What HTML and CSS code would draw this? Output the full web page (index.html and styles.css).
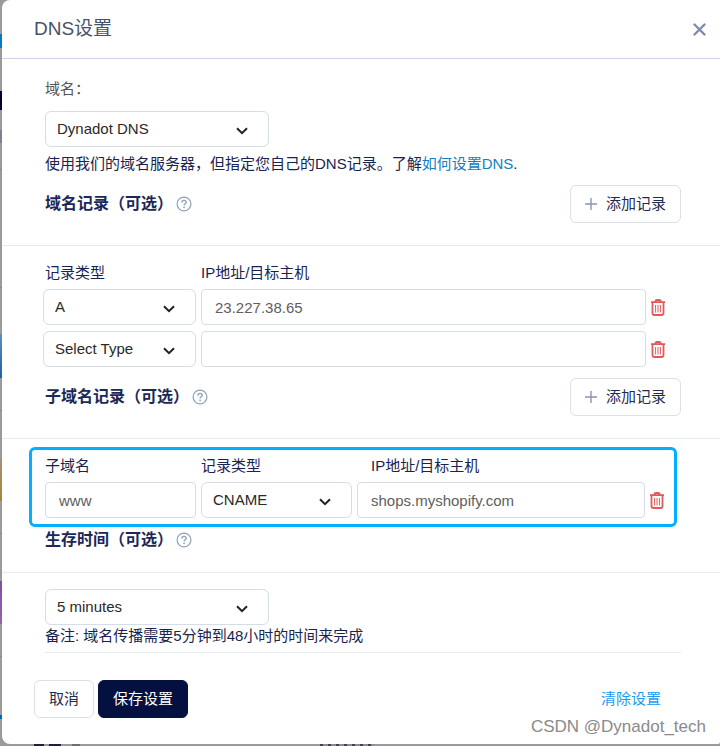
FILE: index.html
```html
<!DOCTYPE html>
<html lang="zh-CN">
<head>
<meta charset="utf-8">
<meta name="viewport" content="width=device-width, initial-scale=1">
<title>DNS设置</title>
<link rel="stylesheet" href="styles.css">
</head>
<body>
<svg class="sprite" aria-hidden="true">
  <symbol id="chevron" viewBox="0 0 12 8"><path d="M1 1.2 6 6.2 11 1.2" fill="none" stroke="#222" stroke-width="2"/></symbol>
  <symbol id="help" viewBox="0 0 16 16"><circle cx="8" cy="8" r="6.9" fill="none" stroke="#8fa1b3" stroke-width="1.2"/><path d="M5.9 6.5c0-1.3.9-2.1 2.1-2.1s2.2.7 2.2 1.9c0 1.5-2.1 1.500-2.100 3.100" fill="none" stroke="#8fa1b3" stroke-width="1.4"/><circle cx="8.1" cy="11.3" r=".9" fill="#8fa1b3"/></symbol>
  <symbol id="plus" viewBox="0 0 12 12"><path d="M6 0v12M0 6h12" fill="none" stroke="#8994b0" stroke-width="1.4"/></symbol>
  <symbol id="trash" viewBox="0 0 14 17"><path d="M1.500 3.500V14c0 1.300.700 2 2 2h7c1.300 0 2-.700 2-2V3.500M0 3.200h14M4.200 3c0-1.300.600-2 1.800-2h2c1.200 0 1.800.700 1.800 2" fill="none" stroke="#e05a5c" stroke-width="1.800"/><path d="M4.600 6v7.500M7 6v7.500M9.400 6v7.500" stroke="#e05a5c" stroke-width="1" fill="none"/></symbol>
</svg>
<main class="modal">
  <header class="modal-head">
    <h1>DNS设置</h1>
    <button class="icon-button" type="button" aria-label="关闭"><svg width="13" height="13" viewBox="0 0 13 13"><path d="M1.500 1.500l10 10M11.500 1.500l-10 10" stroke="#7f8ba8" stroke-width="2.400" stroke-linecap="round"/></svg></button>
  </header>
  <form>
    <section class="section servers">
      <label class="lead" for="server">域名：</label>
      <div class="select wide">
        <select id="server"><option>Dynadot DNS</option></select>
        <svg><use href="#chevron"/></svg>
      </div>
      <p class="hint">使用我们的域名服务器，但指定您自己的DNS记录。了解<a href="#">如何设置DNS</a>.</p>
      <div class="title-row">
        <h2>域名记录（可选）</h2><svg class="help"><use href="#help"/></svg>
        <button class="button add" type="button"><svg><use href="#plus"/></svg>添加记录</button>
      </div>
    </section>

    <section class="section records">
      <div class="grid domain">
        <label class="indent" for="type-1">记录类型</label>
        <label for="host-1">IP地址/目标主机</label>
        <span></span>
        <div class="select">
          <select id="type-1"><option>A</option></select>
          <svg><use href="#chevron"/></svg>
        </div>
        <input id="host-1" type="text" value="23.227.38.65">
        <button class="icon-button" type="button" aria-label="删除"><svg class="trash"><use href="#trash"/></svg></button>
        <div class="select">
          <select aria-label="记录类型"><option>Select Type</option></select>
          <svg><use href="#chevron"/></svg>
        </div>
        <input type="text" aria-label="IP地址/目标主机">
        <button class="icon-button" type="button" aria-label="删除"><svg class="trash"><use href="#trash"/></svg></button>
      </div>
      <div class="title-row">
        <h2>子域名记录（可选）</h2><svg class="help"><use href="#help"/></svg>
        <button class="button add" type="button"><svg><use href="#plus"/></svg>添加记录</button>
      </div>
    </section>

    <section class="section subrecords">
      <div class="highlight grid subdomain">
        <label for="sub">子域名</label>
        <label for="sub-type">记录类型</label>
        <label class="over-input" for="sub-host">IP地址/目标主机</label>
        <span></span>
        <input id="sub" type="text" value="www">
        <div class="select">
          <select id="sub-type"><option>CNAME</option></select>
          <svg><use href="#chevron"/></svg>
        </div>
        <input id="sub-host" type="text" value="shops.myshopify.com">
        <button class="icon-button" type="button" aria-label="删除"><svg class="trash"><use href="#trash"/></svg></button>
      </div>
      <div class="title-row compact">
        <h2>生存时间（可选）</h2><svg class="help"><use href="#help"/></svg>
      </div>
    </section>

    <section class="ttl">
      <div class="select wide">
        <select aria-label="生存时间"><option>5 minutes</option></select>
        <svg><use href="#chevron"/></svg>
      </div>
      <p class="note">备注: 域名传播需要5分钟到48小时的时间来完成</p>
    </section>

    <footer class="actions">
      <button class="button" type="button">取消</button>
      <button class="button primary" type="submit">保存设置</button>
      <a class="clear" href="#">清除设置</a>
    </footer>
  </form>
  <span class="watermark">CSDN @Dynadot_tech</span>
</main>
</body>
</html>
```
FILE: styles.css
```css
* { box-sizing: border-box; }

body {
  min-height: 100vh;
  margin: 0;
  padding: 0 0 2px 2px;
  color: #18244f;
  font: 15px/20px "Liberation Sans", "Noto Sans CJK SC", sans-serif;
  /* dimmed page visible along the left and bottom edges of the dialog */
  background:
    linear-gradient(#087ab9, #087ab9) 0 34px / 2px 14px,
    linear-gradient(#000032, #000032) 0 91px / 2px 19px,
    linear-gradient(#7c8290, #7c8290) 0 130px / 2px 13px,
    linear-gradient(#858a91, #858a91) 0 169px / 2px 1px,
    linear-gradient(#858a91, #858a91) 0 287px / 2px 1px,
    linear-gradient(#5c8fc0, #255f9c) 0 334px / 2px 44px,
    linear-gradient(#858a91, #858a91) 0 410px / 2px 1px,
    linear-gradient(#a58f80, #a58538) 0 458px / 2px 43px,
    linear-gradient(#858a91, #858a91) 0 533px / 2px 1px,
    linear-gradient(#7f4fa3, #8f68ab) 0 581px / 2px 43px,
    linear-gradient(#858a91, #858a91) 0 656px / 2px 1px,
    linear-gradient(#0068b5, #0068b5) 0 715px / 2px 4px,
    linear-gradient(#1a1f45, #1a1f45) 34px 100% / 10px 2px,
    linear-gradient(#1a1f45, #1a1f45) 49px 100% / 12px 2px,
    linear-gradient(#6a6d7c, #6a6d7c) 72px 100% / 8px 2px,
    repeating-linear-gradient(90deg, #3a3f5c 0 3px, #8a8a90 3px 8px) 320px 100% / 54px 2px,
    #9a9a9d;
  background-repeat: no-repeat;
}

h1, h2, p { margin: 0; }
a { color: #1580bd; text-decoration: none; }
.sprite { display: none; }

.modal {
  position: relative;
  background: #fff;
  border-radius: 8px 0 2px 8px;
}

.modal-head {
  display: flex;
  align-items: center;
  justify-content: space-between;
  height: 59px;
  padding: 0 14px 0 32px;
  border-bottom: 1px solid #cdd3e2;
}
h1 { color: #48526a; font-size: 19px; font-weight: 400; line-height: 24px; }

.icon-button {
  display: grid;
  place-items: center;
  padding: 0;
  border: 0;
  background: none;
}
.trash { width: 14px; height: 17px; }

.section {
  padding: 0 39px 22px 43px;
  border-bottom: 1px solid #e8ecf2;
}
.servers { padding-top: 20px; }
.records { padding-top: 17px; }
.subrecords { padding-top: 8px; }

.lead {
  display: block;
  margin-bottom: 12px;
  color: #555;
}

.select { display: grid; align-items: center; }
.select > * { grid-area: 1 / 1; }
.select svg {
  width: 12px;
  height: 8px;
  margin-top: 3px;
  margin-right: 21px;
  justify-self: end;
  pointer-events: none;
}
.wide { width: 224px; }

select, input {
  width: 100%;
  min-width: 0;
  height: 36px;
  font: inherit;
  background: #fff;
  border: 1px solid #d5dee6;
}
select {
  appearance: none;
  padding: 0 36px 0 11px;
  color: #292929;
  border-radius: 6px;
}
input {
  padding: 0 13px;
  color: #606060;
  border-radius: 4px;
}

.hint { padding: 5px 0 9px; line-height: 24px; }

.title-row { display: flex; align-items: center; height: 38px; }
.title-row.compact { height: 20px; margin-top: 3px; }
h2 { font-size: 16px; font-weight: 700; line-height: 20px; color: #1c2856; }
.help { width: 16px; height: 16px; margin-left: 3px; }

.button {
  height: 38px;
  padding: 0 14px;
  color: #1f2a52;
  font: inherit;
  background: #fff;
  border: 1px solid #d9e0ea;
  border-radius: 6px;
}
.add {
  display: flex;
  align-items: center;
  gap: 9px;
  margin-left: auto;
}
.add svg { width: 12px; height: 12px; }

.grid { display: grid; align-items: center; row-gap: 6px; }
.domain {
  grid-template-columns: 153px 1fr 14px;
  column-gap: 5px;
  margin: 0 16px 11px -2px;
}
.indent { padding-left: 2px; }
.subdomain {
  grid-template-columns: 151px 151px 1fr 14px;
  column-gap: 5px;
}
.over-input { padding-left: 14px; }
.highlight {
  margin: 0 4px 0 -16px;
  padding: 6px 10px 6px 13px;
  border: 3px solid #00b0ff;
  border-radius: 6px;
}

.ttl {
  margin: 0 39px 0 43px;
  padding: 16px 0 5px;
  border-bottom: 1px solid #e8ecf2;
}
.note { line-height: 22px; }

.actions {
  display: flex;
  align-items: center;
  gap: 4px;
  padding: 27px 59px 26px 32px;
}
.primary { color: #fff; background: #04103f; border-color: #04103f; }
.clear { margin-left: auto; color: #1b9cf2; }

.watermark {
  position: absolute;
  right: 14px;
  bottom: 7px;
  color: #8a8a8a;
  font-size: 17px;
}
```
